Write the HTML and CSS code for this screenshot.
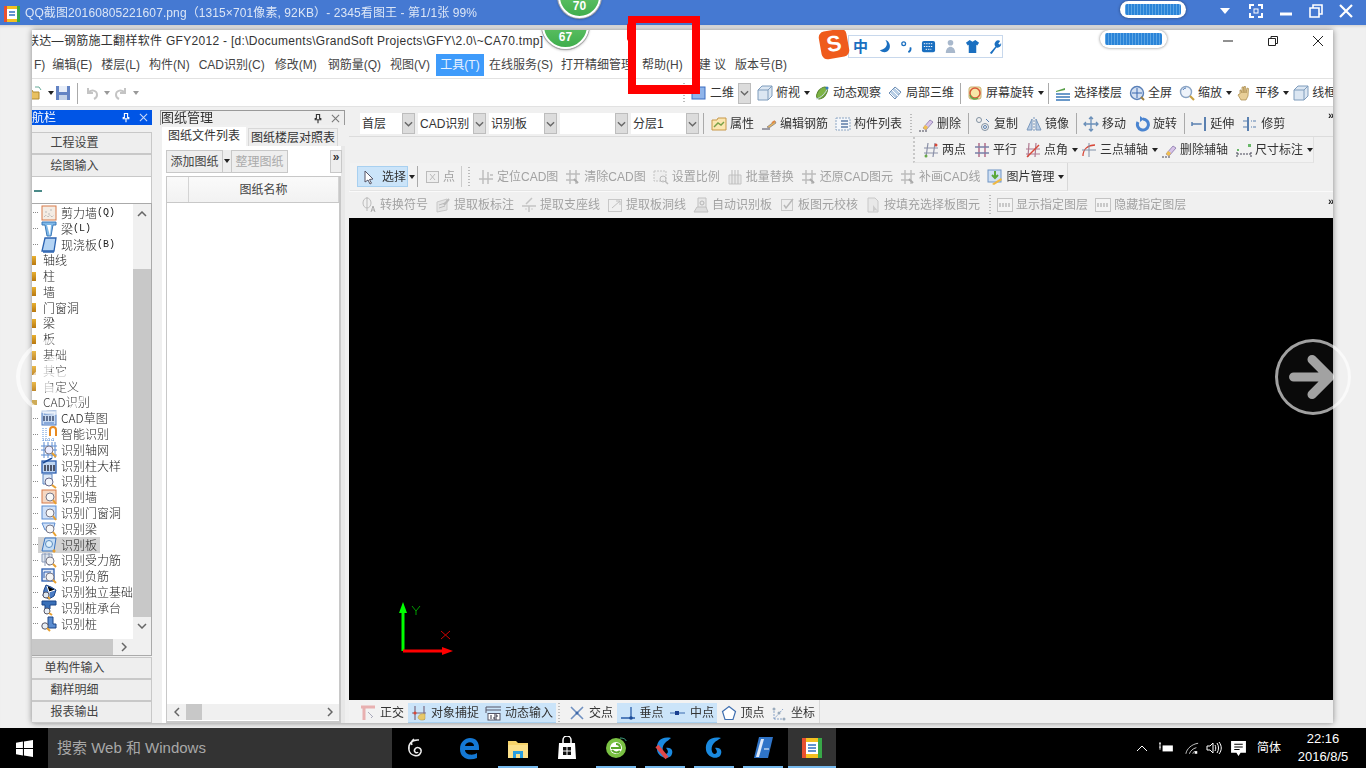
FILE: index.html
```html
<!DOCTYPE html>
<html lang="zh-CN">
<head>
<meta charset="utf-8">
<title>QQ截图20160805221607.png - 2345看图王</title>
<link rel="stylesheet" href="styles.css">
</head>
<body>
<svg class="defs" width="0" height="0" aria-hidden="true">
<defs>
<symbol id="open" viewBox="0 0 16 16"><path d="M1 5h5l1 2h6v7H1z" fill="#e8c060" stroke="#b08a30"/><path d="M9 2l4 0 2 3" fill="none" stroke="#6a9"/></symbol>
<symbol id="save" viewBox="0 0 16 16"><rect x="1" y="1" width="14" height="14" fill="#6484c4"/><rect x="4" y="1" width="8" height="6" fill="#e8eef8"/><rect x="4" y="10" width="8" height="5" fill="#c4d2e8"/></symbol>
<symbol id="undo" viewBox="0 0 16 16"><path d="M4 3v5h5M4 8c3-4 9-3 9 2 0 2-1 3-3 4" fill="none" stroke="#c4c4c4" stroke-width="2"/></symbol>
<symbol id="redo" viewBox="0 0 16 16"><path d="M12 3v5H7M12 8C9 4 3 5 3 10c0 2 1 3 3 4" fill="none" stroke="#c4c4c4" stroke-width="2"/></symbol>
<symbol id="square" viewBox="0 0 16 16"><rect x="1" y="2" width="13" height="12" fill="#8fb4ea" stroke="#3a6cc0"/></symbol>
<symbol id="cube" viewBox="0 0 16 16"><path d="M1 5l4-4h10v10l-4 4H1z" fill="#dbe6f2" stroke="#7f9cbc"/><path d="M1 5h10v10M11 5l4-4" fill="none" stroke="#7f9cbc"/></symbol>
<symbol id="orbit" viewBox="0 0 16 16"><ellipse cx="8" cy="8" rx="4" ry="7" transform="rotate(40 8 8)" fill="#7cb342" stroke="#54802a"/><path d="M2 14C7 13 12 8 14 2" fill="none" stroke="#c8d8e8"/><circle cx="13" cy="3" r="1.500" fill="#3a7cc0"/></symbol>
<symbol id="hatch" viewBox="0 0 16 16"><path d="M2 8l6-6 6 5-6 7z" fill="#b9cfe6" stroke="#6f8fb5"/><path d="M5 5l6 6M8 3l5 5M3 8l5 5" stroke="#fff"/></symbol>
<symbol id="spin" viewBox="0 0 16 16"><rect x="2" y="2" width="12" height="12" rx="2" fill="#f7e6a8" stroke="#c8b070"/><circle cx="8" cy="8" r="5" fill="none" stroke="#d8583a" stroke-width="1.500"/><path d="M3 10a5 5 0 0 0 8 3" fill="none" stroke="#62a84a" stroke-width="1.500"/></symbol>
<symbol id="floors" viewBox="0 0 16 16"><path d="M1 6l9-3v2l-9 2z" fill="#5aa04a"/><path d="M1 9h14M1 12h14M1 15h14" stroke="#3a78b8" stroke-width="1.500"/></symbol>
<symbol id="full" viewBox="0 0 16 16"><circle cx="8" cy="8" r="6.500" fill="#d4e0f2" stroke="#5a80b8" stroke-width="1.400"/><path d="M8 3v10M3 8h10" stroke="#3a68b0"/><path d="M12 12l3 3" stroke="#a08040" stroke-width="2"/></symbol>
<symbol id="zoomi" viewBox="0 0 16 16"><circle cx="7" cy="7" r="5.500" fill="#eef3fa" stroke="#8aa4c4" stroke-width="1.400"/><path d="M11 11l4 4" stroke="#c8a040" stroke-width="2.200"/><path d="M4 5a3 3 0 0 1 3-2" stroke="#4a78b8" fill="none"/></symbol>
<symbol id="hand" viewBox="0 0 16 16"><path d="M4 9V5l1 0 1 3V2h1.500l.5 6V1.500h1.500L10 8l1-5 1.500.5L12 11l-2 4H5L2 10l1-1z" fill="#e8cf98" stroke="#a88848" stroke-width=".7"/></symbol>
<symbol id="attr" viewBox="0 0 16 16"><path d="M1 4h5l1-2h8v12H1z" fill="#fbe6b0" stroke="#c89848"/><path d="M3 11l4-4 3 2 3-3" fill="none" stroke="#78a048" stroke-width="1.400"/></symbol>
<symbol id="pen" viewBox="0 0 16 16"><path d="M1 13h8" stroke="#667" stroke-width="1.200"/><path d="M6 11l8-6 1 2-7 5z" fill="#e8b860" stroke="#667" stroke-width=".6"/><path d="M11 7l3-2" stroke="#d84" stroke-width="2"/></symbol>
<symbol id="list" viewBox="0 0 16 16"><rect x="1" y="2" width="14" height="12" fill="#f4f7fb" stroke="#8ca6c4" stroke-dasharray="2 1"/><path d="M6 5h7M6 8h7M6 11h7" stroke="#5b7ca8" stroke-width="1.300"/></symbol>
<symbol id="erase" viewBox="0 0 16 16"><path d="M1 15h8" stroke="#445" stroke-dasharray="2 1"/><path d="M5 12l7-8 3 2-7 8z" fill="#d8c4e8" stroke="#7a68a0" stroke-width=".7"/><path d="M5 12l2-3 3 2-2 3z" fill="#f0c050"/></symbol>
<symbol id="copy" viewBox="0 0 16 16"><circle cx="4" cy="4" r="2.500" fill="none" stroke="#8090a0"/><circle cx="10" cy="11" r="3.500" fill="none" stroke="#8090a0"/><circle cx="10" cy="11" r="1.500" fill="none" stroke="#5a80b0"/><path d="M11 3l3 3" stroke="#5a80b0"/></symbol>
<symbol id="mirror" viewBox="0 0 16 16"><path d="M1 14L6 3v11zM15 14L10 3v11z" fill="#b9cce4" stroke="#7a98bc"/><path d="M8 1v14" stroke="#7a98bc" stroke-dasharray="2 1"/></symbol>
<symbol id="move" viewBox="0 0 16 16"><path d="M8 1v14M1 8h14M6 3l2-2 2 2M6 13l2 2 2-2M3 6L1 8l2 2M13 6l2 2-2 2" fill="none" stroke="#6a8fb8" stroke-width="1.300"/></symbol>
<symbol id="rot" viewBox="0 0 16 16"><path d="M9 3a5.500 5.500 0 1 1-5 3" fill="none" stroke="#4a84d0" stroke-width="3"/><path d="M6 0l4 3-4 3z" fill="#4a84d0"/></symbol>
<symbol id="extend" viewBox="0 0 16 16"><path d="M1 8h9M1 6v4" stroke="#5a80b0" stroke-width="1.500"/><path d="M10 8h2" stroke="#5a80b0" stroke-dasharray="1 1"/><path d="M14 1v14" stroke="#5a80b0" stroke-width="2"/></symbol>
<symbol id="trim" viewBox="0 0 16 16"><path d="M1 5h13M1 11h13" stroke="#5a80b0" stroke-dasharray="6 2 1 1"/><path d="M6 1v14" stroke="#5a80b0" stroke-width="2"/></symbol>
<symbol id="aux2" viewBox="0 0 16 16"><path d="M5 1L3 15M12 1l-2 14M1 6h14M1 11h14" stroke="#8a90a8" stroke-width="1.200"/><circle cx="3" cy="14" r="1.500" fill="#68a848"/><circle cx="13" cy="3" r="1.500" fill="#d84838"/></symbol>
<symbol id="par" viewBox="0 0 16 16"><path d="M5 1v14M11 1v14" stroke="#a85878" stroke-width="1.300"/><path d="M1 5h14M1 11h14" stroke="#7880a8" stroke-width="1.300"/></symbol>
<symbol id="ang" viewBox="0 0 16 16"><path d="M4 1L3 15M11 1l-1 14M1 7h14M1 12h14" stroke="#b07890" stroke-width="1.200"/><path d="M2 15L14 3" stroke="#d84838" stroke-width="1.400"/></symbol>
<symbol id="three" viewBox="0 0 16 16"><path d="M2 14c0-7 5-11 12-11" fill="none" stroke="#d84838" stroke-width="1.300"/><path d="M8 1v14M1 8h14" stroke="#8090a8"/></symbol>
<symbol id="dim" viewBox="0 0 16 16"><path d="M1 12h14M1 10v5M15 10v5" stroke="#445" stroke-dasharray="2 1"/><rect x="12" y="2" width="3" height="3" fill="#68b868"/><rect x="1" y="7" width="2" height="2" fill="#68b868"/></symbol>
<symbol id="arrowc" viewBox="0 0 16 16"><path d="M4 2v11l3-2 2 4 1.500-.8-2-3.700 3.500-.5z" fill="#fff" stroke="#556"/></symbol>
<symbol id="pbox" viewBox="0 0 16 16"><rect x="1.500" y="2.500" width="12" height="11" fill="#eee" stroke="#bbb"/><path d="M5 5l5 6M10 5l-5 6" stroke="#bbb"/></symbol>
<symbol id="g-hash" viewBox="0 0 16 16"><path d="M5 1v14M10 3v12M1 10h14M12 6h3" stroke="#bdbdbd" stroke-width="1.400"/></symbol>
<symbol id="g-clr" viewBox="0 0 16 16"><path d="M5 1v14M11 1v14M1 5h14M1 11h9" stroke="#bdbdbd" stroke-width="1.400"/><path d="M9 10l4 4" stroke="#aaa" stroke-width="2"/></symbol>
<symbol id="g-scale" viewBox="0 0 16 16"><rect x="1" y="2" width="12" height="10" fill="#eee" stroke="#c4c4c4" stroke-dasharray="2 1"/><circle cx="10" cy="10" r="3" fill="none" stroke="#bbb"/><path d="M12 12l3 3" stroke="#bbb" stroke-width="1.500"/></symbol>
<symbol id="g-batch" viewBox="0 0 16 16"><path d="M2 6h12v9H2z" fill="#e8e8e8" stroke="#c4c4c4"/><path d="M5 1v14M8 1v14M11 1v14" stroke="#bbb"/></symbol>
<symbol id="g-sym" viewBox="0 0 16 16"><ellipse cx="6" cy="6" rx="4" ry="5" fill="none" stroke="#bbb"/><path d="M6 0v14" stroke="#bbb"/><path d="M10 15l2-6 2 6M11 13h2" stroke="#aaa" fill="none"/></symbol>
<symbol id="g-note" viewBox="0 0 16 16"><path d="M2 5l10-3v11L2 15z" fill="#e4e4e4" stroke="#c8c8c8"/><path d="M4 8l6-2M4 11l6-2" stroke="#bbb"/><path d="M9 8l5-6" stroke="#bbb" stroke-width="2"/></symbol>
<symbol id="g-seat" viewBox="0 0 16 16"><path d="M1 9h14M8 9v6M11 1L5 7" stroke="#c4c4c4" stroke-width="1.500"/><path d="M4 12h8" stroke="#ccc" stroke-dasharray="2 1"/></symbol>
<symbol id="g-hole" viewBox="0 0 16 16"><rect x="1.500" y="2.500" width="13" height="12" fill="#f0f0f0" stroke="#c8c8c8"/><path d="M5 11l8-7M9 4h4v4" fill="none" stroke="#c0c0c0"/></symbol>
<symbol id="g-auto" viewBox="0 0 16 16"><path d="M5 1h8v10H5z" fill="#e8e8e8" stroke="#c0c0c0"/><path d="M1 15l3-5h9l2 5z" fill="#ddd" stroke="#c0c0c0"/><circle cx="9" cy="6" r="2" fill="none" stroke="#b4b4b4"/></symbol>
<symbol id="g-check" viewBox="0 0 16 16"><rect x="2.500" y="2.500" width="11" height="11" fill="#eee" stroke="#c8c8c8"/><path d="M5 8l2 3 7-9" fill="none" stroke="#b8b8b8" stroke-width="1.500"/></symbol>
<symbol id="g-fill" viewBox="0 0 16 16"><path d="M3 1h7l3 3v11H3z" fill="#e8e8e8" stroke="#c8c8c8"/><path d="M8 8v7l2-2 3 1z" fill="#ccc"/></symbol>
<symbol id="g-cad" viewBox="0 0 16 14"><rect x=".5" y=".5" width="15" height="13" fill="#f4f4f4" stroke="#c4c4c4"/><path d="M3 5v4M6 5v4M9 5v4M12 5v4" stroke="#bbb" stroke-width="1.500"/></symbol>
<symbol id="picm" viewBox="0 0 16 16"><rect x="1" y="1" width="13" height="12" fill="#cfe0f4" stroke="#6f94c4"/><path d="M8 2v6M5 6l3 3 3-3" fill="none" stroke="#5aa83a" stroke-width="2"/><path d="M5 15l9-6 1 2-8 5z" fill="#f0b840"/></symbol>
<symbol id="ortho" viewBox="0 0 16 16"><path d="M1 2h14M4 2v13" stroke="#e8b0b0" stroke-width="3"/><path d="M8 7l5 5M11 13l2-2" stroke="#aab"/></symbol>
<symbol id="snap" viewBox="0 0 16 16"><path d="M4 1v14M13 1v14M1 8h14" stroke="#7a6a80" stroke-width="1.200"/><circle cx="4" cy="8" r="1.600" fill="#d84838"/><path d="M7 13c0-3 3-5 7-4v5c-2 2-6 1-7-1z" fill="#e8c868" stroke="#b8983c" stroke-width=".5"/></symbol>
<symbol id="dyn" viewBox="0 0 16 16"><path d="M1 2h15M1 5h15M1 2v6" stroke="#556" /><rect x="3" y="8.500" width="12" height="6.500" fill="#fff" stroke="#556"/><path d="M6 10v4M9 10h3v2h-3v2h3" stroke="#334" fill="none"/></symbol>
<symbol id="cross" viewBox="0 0 16 16"><path d="M2 2l12 12M14 2L2 14" stroke="#6e8fc0" stroke-width="1.600"/><circle cx="8" cy="8" r="1.500" fill="#3a66a8"/></symbol>
<symbol id="perp" viewBox="0 0 16 16"><path d="M1 13h14M11 2v11" stroke="#2a5ca8" stroke-width="1.300"/><circle cx="11" cy="13" r="1.800" fill="#1a4a98"/></symbol>
<symbol id="mid" viewBox="0 0 16 16"><path d="M0 8h15" stroke="#5a86c0" stroke-width="1.300"/><rect x="5" y="6" width="4" height="4" fill="#1a3f90"/></symbol>
<symbol id="pent" viewBox="0 0 16 16"><path d="M8 1.500l6.500 5-2.500 8H4l-2.500-8z" fill="#fff" stroke="#3f6fb0" stroke-width="1.200"/></symbol>
<symbol id="coord" viewBox="0 0 16 16"><path d="M3 14V5M3 14h10M3 14L12 4" stroke="#8aa4c8" stroke-dasharray="2 1"/><circle cx="3" cy="4" r="1.500" fill="#9ab"/><circle cx="13" cy="14" r="1.500" fill="#9ab"/><circle cx="8" cy="8" r="1.500" fill="#9ab"/></symbol>
<symbol id="t-wall" viewBox="0 0 16 16"><rect x="1" y="1" width="14" height="14" fill="#f4ece4" stroke="#d87a48"/><path d="M3 12l2-2 2 2 2-2 2 2 2-2" stroke="#aaa" stroke-dasharray="1 1" fill="none"/><path d="M4 7h2M9 5h2M7 9h2" stroke="#bbb"/></symbol>
<symbol id="t-beam" viewBox="0 0 16 16"><path d="M1 1h14v3h-3l-2 11H6L4 4H1z" fill="#7eb8e8" stroke="#3a78b8"/><path d="M6 4l4 0-1 11" fill="#fff"/></symbol>
<symbol id="t-slab" viewBox="0 0 16 16"><path d="M4 1h11l-2 13H1z" fill="#b4d4f4" stroke="#2a62b0" stroke-width="1.300"/><path d="M2 15h11" stroke="#2a62b0" stroke-width="1.500"/></symbol>
<symbol id="t-cad" viewBox="0 0 16 16"><rect x="1" y="1" width="14" height="14" fill="#c8daf2" stroke="#4a78c0"/><path d="M3 4l10 0M3 13h10" stroke="#4a78c0"/><path d="M3 6v5M6 6v5M9 6v5M12 6v5" stroke="#1a2a50" stroke-width="1.200"/></symbol>
<symbol id="t-smart" viewBox="0 0 16 16"><path d="M9 10V4a3 3 0 0 1 6 0v6" fill="none" stroke="#e88a20" stroke-width="2"/><path d="M2 2v14M5 2v14M8 12v4M12 12v4M2 14h12" stroke="#5a90d8" stroke-dasharray="1 1"/></symbol>
<symbol id="t-axis" viewBox="0 0 16 16"><path d="M3 0v16M7 0v16M11 0v16M14 0v16M0 4h16M0 8h16M0 13h16" stroke="#5a8ad0"/><circle cx="8" cy="8" r="4" fill="#eef" stroke="#778"/><path d="M11 11l4 4" stroke="#e8a030" stroke-width="2"/></symbol>
<symbol id="t-colb" viewBox="0 0 16 16"><rect x="1" y="3" width="14" height="12" fill="#c0d6f2" stroke="#2a5cb0" stroke-width="1.300"/><path d="M4 7v6M7 7v6M10 7v6M13 7v6" stroke="#112" stroke-width="1.300"/><path d="M2 5l9-5" stroke="#1a4a98" stroke-width="1.500"/></symbol>
<symbol id="t-col" viewBox="0 0 16 16"><path d="M2 1h9v10H2z" fill="#dde8f6" stroke="#5a84c0"/><circle cx="8" cy="9" r="4" fill="#f4f6fa" stroke="#668"/><path d="M11 12l4 3" stroke="#e8a030" stroke-width="2"/></symbol>
<symbol id="t-wl" viewBox="0 0 16 16"><rect x="1" y="1" width="14" height="13" fill="#f4d8c4" stroke="#d87a48"/><circle cx="9" cy="8" r="4" fill="#f8f8f8" stroke="#778"/><path d="M12 11l3 4" stroke="#e8a030" stroke-width="2"/></symbol>
<symbol id="t-door" viewBox="0 0 16 16"><rect x="1" y="1" width="14" height="13" fill="#cfe0f8" stroke="#5a8cd0"/><circle cx="9" cy="8" r="4" fill="#f8f8f8" stroke="#778"/><path d="M12 11l3 4" stroke="#e8a030" stroke-width="2"/></symbol>
<symbol id="t-bm" viewBox="0 0 16 16"><path d="M1 2h13L12 9H4z" fill="#cfe0f8" stroke="#5a8cd0"/><circle cx="9" cy="8" r="4" fill="#f8f8f8" stroke="#778"/><path d="M12 11l3 4" stroke="#e8a030" stroke-width="2"/></symbol>
<symbol id="t-sl" viewBox="0 0 16 16"><path d="M4 1h11l-2 13H1z" fill="#c4dcf4" stroke="#3a74c0"/><circle cx="8" cy="7" r="3.500" fill="#e0f0fa" stroke="#5a8cc0"/><path d="M12 13l2 2" stroke="#e8a030" stroke-width="2.500"/></symbol>
<symbol id="t-bar" viewBox="0 0 16 16"><path d="M1 2h10v8H1zM4 0v14M8 0v14" fill="#dfe6ee" stroke="#8a9ab8"/><circle cx="9" cy="9" r="4" fill="#f4f4f4" stroke="#778"/><path d="M12 12l3 3" stroke="#e8a030" stroke-width="2"/></symbol>
<symbol id="t-neg" viewBox="0 0 16 16"><rect x="1" y="1" width="12" height="12" fill="#dfe8f6" stroke="#2a5cb0" stroke-width="1.300"/><path d="M3 4h7M3 4v6" stroke="#2a5cb0"/><circle cx="9" cy="9" r="4" fill="#f4f4f4" stroke="#778"/><path d="M12 12l3 3" stroke="#e8a030" stroke-width="2"/></symbol>
<symbol id="t-fnd" viewBox="0 0 16 16"><path d="M5 1l5 2 5 3-2 6-5 3-6-3 1-6z" fill="#4a7cc4" stroke="#1a4488"/><path d="M6 2l2 6 6-2M8 8l0 6" stroke="#fff"/><circle cx="5" cy="11" r="3" fill="#e0e8f0" stroke="#556"/><path d="M7 13l2 2" stroke="#e8a030" stroke-width="2"/></symbol>
<symbol id="t-cap" viewBox="0 0 16 16"><path d="M1 1h14v4H9v4H4V5H1z" fill="#3a70b8" stroke="#1a4488"/><circle cx="6" cy="11" r="3" fill="#e8eef4" stroke="#556"/><path d="M8 13l3 2" stroke="#e8a030" stroke-width="2"/></symbol>
<symbol id="t-pile" viewBox="0 0 16 16"><path d="M7 1h5v7h3v4H7z" fill="#5a8cd0" stroke="#1a4488"/><circle cx="4" cy="10" r="3.200" fill="#e8eef4" stroke="#556"/><path d="M6 12l3 3" stroke="#e8a030" stroke-width="2"/></symbol>
<symbol id="pin" viewBox="0 0 10 12"><path d="M3 1h4v5h1.500v1.500h-7V6H3zM5 7.500V12" fill="none" stroke="currentColor" stroke-width="1.400"/></symbol>
<symbol id="x" viewBox="0 0 10 10"><path d="M1 1l8 8M9 1L1 9" stroke="currentColor" stroke-width="1.200"/></symbol>
<symbol id="chev" viewBox="0 0 10 6"><path d="M1 1l4 4 4-4" fill="none" stroke="currentColor" stroke-width="1.500"/></symbol>
</defs>
</svg>

<header class="viewer-bar">
  <svg class="viewer-logo" viewBox="0 0 16 18"><rect x="0" y="2" width="16" height="16" rx="1" fill="#f4c020"/><rect x="0" y="2" width="3" height="16" fill="#e85030"/><rect x="13" y="2" width="3" height="16" fill="#38a848"/><rect x="3" y="5" width="10" height="10" fill="#fff"/><path d="M5 8h6M5 11h6" stroke="#3070c0" stroke-width="1.500"/></svg>
  <span class="viewer-title">QQ截图20160805221607.png（1315×701像素, 92KB）- 2345看图王 - 第1/1张 99%</span>
  <div class="viewer-controls">
    <span class="vtri"></span>
    <svg class="vbtn" viewBox="0 0 16 16"><path d="M2 6V2h4M10 2h4v4M14 10v4h-4M6 14H2v-4" fill="none" stroke="#fff" stroke-width="2"/><rect x="6" y="6" width="4" height="4" fill="none" stroke="#fff"/></svg>
    <svg class="vbtn" viewBox="0 0 16 16"><path d="M2 11h12" stroke="#fff" stroke-width="3"/></svg>
    <svg class="vbtn" viewBox="0 0 16 16"><path d="M2 5h9v9H2zM5 5V2h9v9h-3" fill="none" stroke="#fff" stroke-width="1.600"/></svg>
    <svg class="vbtn" viewBox="0 0 16 16"><path d="M2 2l12 12M14 2L2 14" stroke="#fff" stroke-width="2.200"/></svg>
  </div>
  <div class="score score-top"><b>70</b></div>
  <div class="pill pill-top"><i></i></div>
</header>

<main class="stage">
  <div class="app">
    <div class="app-title"><span class="app-title-text">联达—钢筋施工翻样软件 GFY2012 - [d:\Documents\GrandSoft Projects\GFY\2.0\~CA70.tmp]</span></div>
    <nav class="menu">
      <span class="m-first">F)</span><span>编辑(E)</span><span>楼层(L)</span><span>构件(N)</span><span>CAD识别(C)</span><span class="m-mod">修改(M)</span><span class="m-steel">钢筋量(Q)</span><span>视图(V)</span><span class="m-on">工具(T)</span><span>在线服务(S)</span><span class="m-open">打开精细管理</span><span class="m-help">帮助(H)</span><span class="m-sug">建 议</span><span>版本号(B)</span>
    </nav>
    <div class="topbar">
      <div class="top-left">
        <svg class="ic ic-clip"><use href="#open"/></svg><i class="caret dark"></i>
        <svg class="ic ic-save"><use href="#save"/></svg><i class="sep sep-save"></i>
        <svg class="ic"><use href="#undo"/></svg><i class="caret"></i>
        <svg class="ic"><use href="#redo"/></svg><i class="caret"></i>
      </div>
      <i class="handle"></i>
      <div class="seq g6 top-right">
        <span class="tool"><svg class="ic"><use href="#square"/></svg><span class="t2d">二维</span><b class="dd"><svg><use href="#chev"/></svg></b></span>
        <span class="tool"><svg class="ic"><use href="#cube"/></svg>俯视<i class="caret dark"></i></span>
        <span class="tool"><svg class="ic"><use href="#orbit"/></svg>动态观察</span>
        <span class="tool"><svg class="ic"><use href="#hatch"/></svg>局部三维</span>
        <i class="sep"></i>
        <span class="tool"><svg class="ic"><use href="#spin"/></svg>屏幕旋转<i class="caret dark"></i></span>
        <i class="sep"></i>
        <span class="tool"><svg class="ic"><use href="#floors"/></svg>选择楼层</span>
        <span class="tool t-nudge"><svg class="ic"><use href="#full"/></svg>全屏</span>
        <span class="tool t-nudge"><svg class="ic"><use href="#zoomi"/></svg>缩放<i class="caret dark"></i></span>
        <span class="tool"><svg class="ic"><use href="#hand"/></svg>平移<i class="caret dark"></i></span>
        <span class="tool"><svg class="ic"><use href="#cube"/></svg>线框</span>
      </div>
    </div>

    <div class="workspace">
      <aside class="nav">
        <div class="nav-head"><span>航栏</span><svg class="pin"><use href="#pin"/></svg><svg class="close"><use href="#x"/></svg></div>
        <div class="nav-btn">工程设置</div>
        <div class="nav-btn nb-tall">绘图输入</div>
        <div class="nav-search"><i></i></div>
        <div class="tree-box">
          <div class="tree-main">
            <ul class="tree">
              <li class="l2"><i></i><svg class="ic"><use href="#t-wall"/></svg>剪力墙<span class="mono">(Q)</span></li>
              <li class="l2"><i></i><svg class="ic"><use href="#t-beam"/></svg>梁<span class="mono">(L)</span></li>
              <li class="l2"><i></i><svg class="ic"><use href="#t-slab"/></svg>现浇板<span class="mono">(B)</span></li>
              <li class="l1"><i></i>轴线</li>
              <li class="l1"><i></i>柱</li>
              <li class="l1"><i></i>墙</li>
              <li class="l1"><i></i>门窗洞</li>
              <li class="l1"><i></i>梁</li>
              <li class="l1"><i></i>板</li>
              <li class="l1"><i></i>基础</li>
              <li class="l1"><i></i>其它</li>
              <li class="l1"><i></i>自定义</li>
              <li class="l1 open"><i></i>CAD识别</li>
              <li class="l2"><i></i><svg class="ic"><use href="#t-cad"/></svg>CAD草图</li>
              <li class="l2"><i></i><svg class="ic"><use href="#t-smart"/></svg>智能识别</li>
              <li class="l2"><i></i><svg class="ic"><use href="#t-axis"/></svg>识别轴网</li>
              <li class="l2"><i></i><svg class="ic"><use href="#t-colb"/></svg>识别柱大样</li>
              <li class="l2"><i></i><svg class="ic"><use href="#t-col"/></svg>识别柱</li>
              <li class="l2"><i></i><svg class="ic"><use href="#t-wl"/></svg>识别墙</li>
              <li class="l2"><i></i><svg class="ic"><use href="#t-door"/></svg>识别门窗洞</li>
              <li class="l2"><i></i><svg class="ic"><use href="#t-bm"/></svg>识别梁</li>
              <li class="l2 sel"><i></i><svg class="ic"><use href="#t-sl"/></svg><span>识别板</span></li>
              <li class="l2"><i></i><svg class="ic"><use href="#t-bar"/></svg>识别受力筋</li>
              <li class="l2"><i></i><svg class="ic"><use href="#t-neg"/></svg>识别负筋</li>
              <li class="l2"><i></i><svg class="ic"><use href="#t-fnd"/></svg>识别独立基础</li>
              <li class="l2"><i></i><svg class="ic"><use href="#t-cap"/></svg>识别桩承台</li>
              <li class="l2"><i></i><svg class="ic"><use href="#t-pile"/></svg>识别桩</li>
            </ul>
            <div class="vscroll">
              <svg class="up"><use href="#chev"/></svg>
              <div class="vthumb"></div>
              <svg class="down"><use href="#chev"/></svg>
            </div>
          </div>
          <div class="hscroll"><div class="hthumb"></div><svg class="right"><use href="#chev"/></svg></div>
        </div>
        <div class="nav-btn nb2 nb-first">单构件输入</div>
        <div class="nav-btn nb2">翻样明细</div>
        <div class="nav-btn nb2">报表输出</div>
      </aside>

      <section class="panel">
        <div class="panel-head"><span>图纸管理</span><svg class="pin"><use href="#pin"/></svg><svg class="close"><use href="#x"/></svg></div>
        <div class="tabs"><span class="tab on">图纸文件列表</span><span class="tab">图纸楼层对照表</span></div>
        <div class="panel-body">
          <div class="panel-tools">
            <span class="pbtn">添加图纸</span><span class="pdrop"><i class="caret dark"></i></span><span class="pbtn off">整理图纸</span>
            <span class="pmore">»</span>
          </div>
          <div class="table">
            <div class="thead"><span class="th0"></span><span class="th1">图纸名称</span></div>
            <div class="tbody"></div>
            <div class="thscroll"><svg class="left"><use href="#chev"/></svg><div class="ththumb"></div><svg class="right"><use href="#chev"/></svg></div>
          </div>
        </div>
      </section>

      <section class="work">
        <div class="row row1">
          <span class="combo c55"><span>首层</span><b class="dd"><svg><use href="#chev"/></svg></b></span>
          <span class="combo c68"><span>CAD识别</span><b class="dd"><svg><use href="#chev"/></svg></b></span>
          <span class="combo c68"><span>识别板</span><b class="dd"><svg><use href="#chev"/></svg></b></span>
          <span class="combo c68"><span></span><b class="dd"><svg><use href="#chev"/></svg></b></span>
          <span class="combo c68"><span>分层1</span><b class="dd"><svg><use href="#chev"/></svg></b></span>
          <i class="sep sep-a"></i>
          <div class="seq g7">
            <span class="tool"><svg class="ic"><use href="#attr"/></svg>属性</span>
            <span class="tool"><svg class="ic"><use href="#pen"/></svg>编辑钢筋</span>
            <span class="tool"><svg class="ic"><use href="#list"/></svg>构件列表</span>
          </div>
          <i class="handle h-a"></i>
          <div class="seq g8">
            <span class="tool"><svg class="ic"><use href="#erase"/></svg>删除</span>
            <i class="sep"></i>
            <span class="tool"><svg class="ic"><use href="#copy"/></svg>复制</span>
            <span class="tool"><svg class="ic"><use href="#mirror"/></svg>镜像</span>
            <i class="sep"></i>
            <span class="tool"><svg class="ic"><use href="#move"/></svg>移动</span>
            <span class="tool"><svg class="ic"><use href="#rot"/></svg>旋转</span>
            <i class="sep"></i>
            <span class="tool"><svg class="ic"><use href="#extend"/></svg>延伸</span>
            <span class="tool"><svg class="ic"><use href="#trim"/></svg>修剪</span>
          </div>
          <span class="more">»</span>
        </div>

        <div class="row row2">
          <div class="aux seq g8">
            <span class="tool"><svg class="ic"><use href="#aux2"/></svg>两点</span>
            <span class="tool"><svg class="ic"><use href="#par"/></svg>平行</span>
            <span class="tool"><svg class="ic"><use href="#ang"/></svg>点角<i class="caret dark"></i></span>
            <span class="tool"><svg class="ic"><use href="#three"/></svg>三点辅轴<i class="caret dark"></i></span>
            <span class="tool"><svg class="ic"><use href="#erase"/></svg>删除辅轴</span>
            <span class="tool"><svg class="ic"><use href="#dim"/></svg>尺寸标注<i class="caret dark"></i></span>
          </div>
        </div>

        <div class="row row3">
          <div class="rowbox">
            <span class="select"><svg class="ic"><use href="#arrowc"/></svg>选择<i class="caret dark"></i></span>
            <i class="sep sep-b"></i>
            <span class="tool off pt"><svg class="ic"><use href="#pbox"/></svg>点</span>
            <i class="sep sep-c"></i>
            <i class="handle h-b"></i>
            <div class="seq g7">
              <span class="tool off"><svg class="ic"><use href="#g-hash"/></svg>定位CAD图</span>
              <span class="tool off"><svg class="ic"><use href="#g-clr"/></svg>清除CAD图</span>
              <span class="tool off"><svg class="ic"><use href="#g-scale"/></svg>设置比例</span>
              <span class="tool off"><svg class="ic"><use href="#g-batch"/></svg>批量替换</span>
              <span class="tool off"><svg class="ic"><use href="#g-clr"/></svg>还原CAD图元</span>
              <span class="tool off"><svg class="ic"><use href="#g-clr"/></svg>补画CAD线</span>
              <span class="tool"><svg class="ic"><use href="#picm"/></svg>图片管理<i class="caret dark"></i></span>
            </div>
          </div>
        </div>

        <div class="row row4">
          <div class="seq g7">
            <span class="tool off"><svg class="ic"><use href="#g-sym"/></svg>转换符号</span>
            <span class="tool off"><svg class="ic"><use href="#g-note"/></svg>提取板标注</span>
            <span class="tool off"><svg class="ic"><use href="#g-seat"/></svg>提取支座线</span>
            <span class="tool off"><svg class="ic"><use href="#g-hole"/></svg>提取板洞线</span>
            <span class="tool off"><svg class="ic"><use href="#g-auto"/></svg>自动识别板</span>
            <span class="tool off"><svg class="ic"><use href="#g-check"/></svg>板图元校核</span>
            <span class="tool off"><svg class="ic"><use href="#g-fill"/></svg>按填充选择板图元</span>
          </div>
          <i class="handle h-c"></i>
          <div class="seq g7">
            <span class="tool off"><svg class="ic"><use href="#g-cad"/></svg>显示指定图层</span>
            <span class="tool off"><svg class="ic"><use href="#g-cad"/></svg>隐藏指定图层</span>
          </div>
          <span class="more">»</span>
        </div>

        <div class="canvas">
          <svg class="axes" viewBox="0 0 70 70">
            <path d="M20 12v43" stroke="#00ff00" stroke-width="3"/>
            <path d="M20 6l-4 11h8z" fill="#00ff00"/>
            <path d="M20 55h40" stroke="#ff0000" stroke-width="3"/>
            <path d="M70 55l-11-4v8z" fill="#ff0000"/>
            <path d="M29 10l4 5 4-5M33 15v4" fill="none" stroke="#009a00"/>
            <path d="M58 35l9 8M67 35l-9 8" stroke="#d00000"/>
          </svg>
        </div>

        <div class="status">
          <div class="seq st-a">
            <span class="tool st"><svg class="ic"><use href="#ortho"/></svg>正交</span>
            <span class="tool st on"><svg class="ic"><use href="#snap"/></svg>对象捕捉</span>
            <span class="tool st on"><svg class="ic"><use href="#dyn"/></svg>动态输入</span>
          </div>
          <i class="handle h-d"></i>
          <div class="seq st-b">
            <span class="tool st"><svg class="ic"><use href="#cross"/></svg>交点</span>
            <span class="tool st on"><svg class="ic"><use href="#perp"/></svg>垂点</span>
            <span class="tool st on"><svg class="ic"><use href="#mid"/></svg>中点</span>
            <span class="tool st"><svg class="ic"><use href="#pent"/></svg>顶点</span>
            <span class="tool st"><svg class="ic"><use href="#coord"/></svg>坐标</span>
          </div>
        </div>
      </section>
    </div>

    <div class="score score-app"><b>67</b></div>
    <div class="pill pill-app"><i></i></div>
    <div class="ime">
      <span class="ime-s">S</span>
      <div class="ime-bar">
        <span class="ime-zh">中</span>
        <svg viewBox="0 0 16 16"><path d="M9 1c3 4 2 9-6 11 3 3 8 3 10-1 2-4 0-9-4-10z" fill="#1a6fc0"/></svg>
        <svg viewBox="0 0 16 16"><circle cx="5" cy="5" r="2" fill="none" stroke="#1a6fc0" stroke-width="1.400"/><path d="M12 9c1 2 0 4-2 5" fill="none" stroke="#1a6fc0" stroke-width="2"/></svg>
        <svg viewBox="0 0 16 16"><rect x="1" y="2" width="14" height="12" rx="2" fill="#1a6fc0"/><path d="M3 5h10M3 8h10M5 11h6" stroke="#fff" stroke-dasharray="1.500 1"/></svg>
        <svg viewBox="0 0 16 16"><circle cx="8" cy="4" r="3" fill="#a8b8cc"/><path d="M3 15c0-9 10-9 10 0z" fill="#a8b8cc"/></svg>
        <svg viewBox="0 0 16 16"><path d="M5 1l3 2 3-2 4 3-2 3-1-1v9H4V6L3 7 1 4z" fill="#1a6fc0"/></svg>
        <svg viewBox="0 0 16 16"><path d="M3 15l6-7a4 4 0 0 1 5-6l-2 3 2 1 1-2a4 4 0 0 1-5 5l-5 7z" fill="#1a6fc0"/></svg>
      </div>
    </div>
    <div class="app-controls">
      <svg viewBox="0 0 14 14"><path d="M2 7h10" stroke="#222"/></svg>
      <svg viewBox="0 0 14 14"><path d="M2.500 4.500h7v7h-7zM5 4.500v-2h6.500v7h-2" fill="none" stroke="#222"/></svg>
      <svg viewBox="0 0 14 14"><path d="M2 2l10 10M12 2L2 12" stroke="#222"/></svg>
    </div>
  </div>
</main>

<footer class="taskbar">
  <svg class="win" viewBox="0 0 16 16"><path d="M0 2.500l6.500-1v6H0zM7.500 1.300L16 0v7.500H7.500zM0 8.500h6.500v6l-6.500-1zM7.500 8.500H16V16l-8.500-1.300z" fill="#fff"/></svg>
  <div class="search">搜索 Web 和 Windows</div>
  <div class="tb-icons">
    <span class="tb"><svg viewBox="0 0 24 24"><path d="M16 4C8 3 5 9 6 14c1 6 10 8 12 2 1-4-4-6-6-3s2 5 3 3M11 3c-3 2-3 4-2 6" fill="none" stroke="#eee" stroke-width="1.500"/></svg></span>
    <span class="tb"><svg viewBox="0 0 24 24"><path d="M3 13C3 6 8 2 13 2c6 0 9 4 9 10v2H8c0 5 8 6 12 3v5c-7 3-17 1-17-9zM8 10h9c0-5-8-5-9 0z" fill="#1478d4"/></svg></span>
    <span class="tb run"><svg viewBox="0 0 24 24"><path d="M2 5h8l2 2h10v15H2z" fill="#f6d36a"/><rect x="2" y="9" width="20" height="13" fill="#fbe08a"/><path d="M7 22v-7h10v7h-3v-4h-4v4z" fill="#2a9fe0"/></svg></span>
    <span class="tb"><svg viewBox="0 0 24 24"><path d="M4 7h16l1 16H3z" fill="#fff"/><path d="M8 8V4a4 4 0 0 1 8 0v4" fill="none" stroke="#fff" stroke-width="1.500"/><path d="M8 11h3.500v3.500H8zM12.500 11H16v3.500h-3.500zM8 15.500h3.500V19H8zM12.500 15.500H16V19h-3.500z" fill="#111"/></svg></span>
    <span class="tb run"><svg viewBox="0 0 24 24"><circle cx="12" cy="12" r="10" fill="#7ac143"/><circle cx="12" cy="12" r="6" fill="#fff"/><path d="M7 12h10M12 8c3 0 4 2 4 4M16 15c-2 2-6 2-8-1" stroke="#5aa82a" stroke-width="2" fill="none"/><path d="M16 2c3 0 6 1 6 3" stroke="#4a8" fill="none"/></svg></span>
    <span class="tb run"><svg viewBox="0 0 24 24"><path d="M18 2C8 0 3 6 4 14c1 7 10 10 14 6 3-4 1-9-5-8 2 2 3 5 0 6-4 0-5-8 0-12 1-1 3-2 5-4z" fill="#1a8ae0"/><path d="M4 10l10 12" stroke="#e04848" stroke-width="4"/></svg></span>
    <span class="tb run"><svg viewBox="0 0 24 24"><path d="M19 2C8 0 3 6 4 14c1 7 10 10 14 6 3-4 1-9-5-8 2 2 3 5 0 6-4 0-5-8 0-12 1-1 3-2 6-4z" fill="#1a8ae0"/></svg></span>
    <span class="tb run"><svg viewBox="0 0 24 24"><path d="M8 1h14l-5 21H3z" fill="#2f74c8"/><path d="M5 21L10 3h3L8 21z" fill="#dfeafa"/><path d="M13 13h5" stroke="#fff"/></svg></span>
    <span class="tb run active"><svg viewBox="0 0 24 24"><rect x="2" y="2" width="20" height="20" rx="2" fill="#f4c020"/><rect x="2" y="2" width="4" height="20" fill="#e85030"/><rect x="18" y="2" width="4" height="20" fill="#38a848"/><rect x="6" y="6" width="12" height="12" fill="#fff"/><path d="M8 9h8M8 12h8M8 15h8" stroke="#3070c0" stroke-width="1.500"/></svg></span>
  </div>
  <div class="tray">
    <svg class="t-caret" viewBox="0 0 12 8"><path d="M1 7l5-5 5 5" fill="none" stroke="#fff"/></svg>
    <svg class="t-batt" viewBox="0 0 18 14"><path d="M1 2h2M2 0v6M1 6h2M2 6v3" stroke="#fff"/><rect x="5" y="4" width="12" height="7" fill="#fff"/></svg>
    <svg class="t-wifi" viewBox="0 0 16 14"><path d="M1 13C2 7 8 2 15 1M5 13c1-3 4-6 8-7M9 13c0-1 1-2 2-3" fill="none" stroke="#ddd"/><rect x="11" y="10" width="3" height="3" fill="#fff"/></svg>
    <svg class="t-vol" viewBox="0 0 16 14"><path d="M1 5h3l3-3v10L4 9H1z" fill="none" stroke="#fff"/><path d="M9 4c1 2 1 4 0 6M11 2c2 3 2 7 0 10M13 1c3 4 3 8 0 12" fill="none" stroke="#fff"/></svg>
    <svg class="t-msg" viewBox="0 0 16 16"><path d="M1 1h14v11H10l-2 3-2-3H1z" fill="#fff"/><path d="M4 4h8M4 6.500h8M4 9h5" stroke="#000"/></svg>
    <span class="t-ime">简体</span>
    <span class="t-clock"><span>22:16</span><span>2016/8/5</span></span>
  </div>
</footer>

<div class="nav-arrow arrow-left"><svg viewBox="0 0 76 76"><path d="M59 38H20M38 19L19 38l19 19" fill="none" stroke="#fff" stroke-width="10" stroke-linecap="round" stroke-linejoin="round"/></svg></div>
<div class="nav-arrow arrow-right"><svg viewBox="0 0 76 76"><path d="M17 38h39M37 19l19 19-19 19" fill="none" stroke="#fff" stroke-width="10" stroke-linecap="round" stroke-linejoin="round"/></svg></div>
<div class="mark"><i></i></div>
</body>
</html>
```
FILE: styles.css
```css
* { box-sizing: border-box; }
html, body { margin: 0; padding: 0; }
body {
  position: relative;
  width: 1366px;
  height: 768px;
  overflow: hidden;
  display: flex;
  flex-direction: column;
  background: #f0f0f0;
  color: #333;
  font: 12px/16px "Liberation Sans", "Noto Sans CJK SC", sans-serif;
}
i, b { font-style: normal; }
ul { margin: 0; padding: 0; list-style: none; }
.defs { position: absolute; }

/* viewer bar */
.viewer-bar {
  position: relative;
  flex: 0 0 25px;
  display: flex;
  align-items: center;
  overflow: hidden;
  background: #4579d2;
  color: #dce6f6;
  padding-left: 4px;
}
.viewer-logo { width: 16px; height: 18px; flex: none; }
.viewer-title { margin-left: 5px; white-space: nowrap; letter-spacing: .1px; filter: blur(.3px); }
.viewer-controls { position: absolute; left: 1220px; top: 3px; display: flex; align-items: center; gap: 14px; }
.vtri { width: 0; height: 0; border: 5px solid transparent; border-top: 6px solid #fff; border-bottom: 0; margin-right: 4px; }
.vbtn { width: 16px; height: 16px; }

.score {
  position: absolute;
  border-radius: 50%;
  background: linear-gradient(#7ad07a, #3fae4c);
  border: 2px solid #fff;
  box-shadow: 0 0 0 1px #a8a8a8, 0 1px 3px rgba(0,0,0,.4);
  color: #fff;
  font-size: 12px;
  line-height: 12px;
  display: flex;
  justify-content: center;
  align-items: flex-end;
}
.score-top { left: 558px; top: -25px; width: 43px; height: 43px; padding-bottom: 4px; }
.score-app { left: 510px; top: -28px; width: 47px; height: 47px; padding-bottom: 4px; }

.pill {
  position: absolute;
  border-radius: 9px;
  background: #fff;
  box-shadow: 0 0 3px rgba(0,0,0,.5);
  padding: 3px 5px;
}
.pill i {
  display: block;
  height: 100%;
  border-radius: 2px;
  background: repeating-linear-gradient(90deg, #5aa4e4 0 1px, #2a84d8 1px 3px);
}
.pill-top { left: 1120px; top: 1px; width: 66px; height: 17px; }
.pill-app { left: 1068px; top: 0; width: 67px; height: 18px; }

/* stage and application window */
.stage { flex: 0 0 703px; padding: 5px 33px 5px 32px; background: #f0f0f0; box-shadow: inset 0 3px 3px -2px rgba(0,0,0,.15); }
.app {
  position: relative;
  height: 693px;
  display: flex;
  flex-direction: column;
  overflow: hidden;
  background: #f0f0f0;
  box-shadow: 0 0 6px rgba(0,0,0,.45);
  filter: blur(.3px);
}
.app-title { flex: 0 0 22px; background: #fff; line-height: 22px; white-space: nowrap; overflow: hidden; color: #333; }
.app-title-text { display: block; margin-left: -5px; letter-spacing: .3px; }
.menu { flex: 0 0 26px; display: flex; align-items: center; gap: 9px; background: #fff; white-space: nowrap; color: #444; }
.m-first { margin: 0 -2px 0 2px; }
.m-mod { margin-left: 1px; }
.m-steel { margin-left: 2px; }
.m-on { background: #3e9bfb; color: #e8f2ff; width: 48px; height: 22px; line-height: 22px; text-align: center; margin: 0 -4px 0 -3px; }
.m-open { margin-left: -1px; }
.m-sug { margin-left: 7px; }
.topbar { flex: 0 0 29px; display: flex; align-items: center; padding-top: 1px; background: #fff; border-top: 1px solid #e2e2e2; border-bottom: 1px solid #e2e2e2; white-space: nowrap; overflow: hidden; }
.top-left { flex: 0 0 651px; display: flex; align-items: center; gap: 5px; }
.ic-clip { margin-left: -6px; }
.ic-save { margin-left: 1px; }
.sep-save { margin: 0 1px; }
.top-right { margin-left: 6px; }
.top-right .caret.dark { margin-right: -2px; }
.t-nudge { margin-left: 1px; }

.ic { flex: none; width: 16px; height: 16px; }
.seq { display: flex; align-items: center; }
.g6 { gap: 6px; }
.g7 { gap: 7px; }
.g8 { gap: 8px; }
.tool { display: inline-flex; align-items: center; gap: 3px; white-space: nowrap; color: #333; }
.off { color: #a2a2a2; }
.sep { flex: none; display: block; width: 1px; height: 21px; background: #aaa; }
.handle { flex: none; display: block; width: 2px; height: 20px; background: repeating-linear-gradient(#bbb 0 1px, transparent 1px 3px); }
.caret { flex: none; display: block; width: 0; height: 0; margin: 0 -2px 0 -1px; border: 3.500px solid transparent; border-top: 4px solid #999; border-bottom: 0; }
.caret.dark { border-top-color: #222; margin: 0 -5px 0 1px; }
.dd { flex: none; display: flex; align-items: center; justify-content: center; width: 13px; height: 21px; background: #dcdcdc; border: 1px solid #bdbdbd; color: #666; }
.dd svg { width: 9px; height: 6px; }
.t2d { margin-right: 1px; }

/* nav */
.workspace { flex: 1; display: flex; min-height: 0; }
.nav { flex: 0 0 120px; margin-right: 8px; padding-top: 3px; display: flex; flex-direction: column; }
.nav-head { flex: 0 0 15px; display: flex; align-items: center; background: #0055e6; color: #fff; font-size: 12px; padding-right: 4px; overflow: hidden; }
.nav-head span { flex: 1; }
.pin { width: 8px; height: 11px; margin-right: 9px; }
.close { width: 9px; height: 9px; color: #c8d8f8; }
.nav-btn { flex: 0 0 22px; display: flex; align-items: center; justify-content: center; padding-right: 34px; background: #eee; border: 1px solid #c8c8c8; border-left: 0; color: #444; }
.nav-head + .nav-btn { margin-top: 7px; }
.nb-tall { flex-basis: 23px; }
.nav-search { flex: 0 0 26px; background: #fff; border-right: 1px solid #c8c8c8; padding: 13px 0 0 2px; }
.nav-search i { display: block; width: 8px; height: 2px; background: #4a8a88; }
.tree-box { flex: 0 0 453px; display: flex; flex-direction: column; border: 1px solid #aaa; border-left: 0; background: #f0f0f0; }
.tree-main { flex: 1; display: flex; min-height: 0; }
.tree { flex: 0 0 101px; padding-top: 1px; overflow: hidden; background: #fff; }
.tree li { display: flex; align-items: center; height: 15.8px; white-space: nowrap; color: #222; font-family: "Noto Sans CJK SC", sans-serif; font-weight: 300; }
.l1 i { display: block; flex: none; width: 4px; height: 9px; margin: 0 7px 0 0; background: linear-gradient(#e8b030, #b87810); }
.l1.open i { width: 5px; height: 5px; margin-right: 6px; background: #c8a040; }
.l2 i { display: block; flex: none; width: 6px; height: 1px; margin: 0 2px 0 1px; background: repeating-linear-gradient(90deg, #888 0 1px, transparent 1px 2px); }
.l2 .ic { margin-right: 4px; }
.mono { font: 10px/16px "Liberation Mono", monospace; }
.sel { position: relative; }
.sel::before { content: ""; position: absolute; left: 6px; top: 0; width: 62px; height: 100%; background: #d2d2d2; }
.sel i, .sel .ic, .sel span { position: relative; }
.vscroll { flex: 1; display: flex; flex-direction: column; align-items: center; background: #f0f0f0; color: #666; }
.vscroll svg { width: 10px; height: 6px; flex: none; }
.up { margin-top: 7px; transform: rotate(180deg); }
.vthumb { width: 100%; height: 348px; margin-top: 52px; background: #c8c8c8; }
.down { margin-top: 6px; }
.hscroll { flex: 0 0 16px; display: flex; align-items: center; color: #666; }
.hthumb { width: 81px; height: 100%; background: #c8c8c8; }
.right { width: 10px; height: 6px; margin-left: 6px; transform: rotate(-90deg); }
.left { width: 10px; height: 6px; transform: rotate(90deg); }
.nb2 { flex: 0 0 22px; }
.nb-first { margin-top: 1px; }

/* drawing panel */
.panel { flex: 0 0 185px; margin-right: 4px; padding-top: 3px; display: flex; flex-direction: column; }
.panel-head { flex: 0 0 15px; display: flex; align-items: center; border: 1px solid #999; border-bottom: 0; background: #eee; color: #333; font-size: 13px; padding-right: 4px; overflow: hidden; }
.panel-head span { flex: 1; }
.panel-head .close { color: #777; }
.tabs { flex: 0 0 21px; display: flex; align-items: flex-end; padding: 2px 0 0 2px; }
.tab { height: 18px; line-height: 18px; padding: 0 2px; margin-left: 2px; border: 1px solid #d8d8d8; border-bottom: 0; background: #eee; white-space: nowrap; }
.tab.on { height: 19px; padding: 0 6px; margin-left: 0; background: #fff; border: 0; }
.panel-body { flex: 1; min-height: 0; margin-left: 2px; padding: 4px 4px 0 4px; background: #fff; display: flex; flex-direction: column; box-shadow: inset -4px 0 0 #e8e8e8; }
.panel-tools { flex: 0 0 23px; display: flex; align-items: stretch; }
.pbtn { width: 57px; display: flex; align-items: center; justify-content: center; background: #eee; border: 1px solid #c8c8c8; color: #444; }
.pbtn.off { color: #aaa; }
.pdrop { width: 8px; display: flex; align-items: center; justify-content: center; background: #eee; border-bottom: 1px solid #c8c8c8; }
.pdrop .caret { margin: 0; }
.pmore { margin-left: auto; margin-right: -1px; width: 12px; background: #eee; border: 1px solid #c8c8c8; font-weight: 700; line-height: 12px; text-align: center; }
.table { flex: 1; min-height: 0; margin-top: 3px; display: flex; flex-direction: column; border: 2px solid #c8c8c8; border-width: 1px 2px 2px 1px; }
.thead { flex: 0 0 26px; display: flex; border-bottom: 1px solid #c8c8c8; background: linear-gradient(#fafafa, #f2f2f2); }
.th0 { flex: 0 0 22px; border-right: 1px solid #d4d4d4; }
.th1 { flex: 1; display: flex; align-items: center; justify-content: center; border-right: 1px solid #d4d4d4; color: #444; }
.tbody { flex: 1; background: #fff; }
.thscroll { flex: 0 0 16px; display: flex; align-items: center; background: #f0f0f0; color: #666; margin-bottom: 1px; padding-left: 5px; }
.ththumb { width: 16px; height: 100%; margin-left: 4px; background: #c8c8c8; }
.thscroll .right { margin-left: auto; margin-right: 4px; }

/* work area */
.work { flex: 0 0 984px; min-width: 0; display: flex; flex-direction: column; }
.row { position: relative; display: flex; align-items: center; white-space: nowrap; }
.row1 { flex: 0 0 30px; padding: 4px 0 0 11px; border-bottom: 1px solid #dcdcdc; }
.row2 { flex: 0 0 26px; justify-content: flex-end; padding-right: 19px; }
.row3 { flex: 0 0 28px; padding-left: 1px; }
.row4 { flex: 0 0 27px; padding-left: 12px; border-top: 1px solid #fafafa; }
.combo { display: flex; align-items: center; justify-content: space-between; height: 21px; background: #fff; margin-right: 3px; }
.combo span { padding-left: 2px; }
.c55 { width: 55px; }
.c68 { width: 68px; }
.sep-a { margin: 0 7px 0 1px; }
.h-a { margin: 0 6px 0 8px; }
.row1 .seq .sep { margin: 0 -1.500px; }
.more { position: absolute; right: -1px; top: 2px; font-weight: 700; color: #222; font-size: 11px; line-height: 12px; }
.row4 .more { top: 3px; }
.aux { height: 26px; padding: 0 5px 0 8px; background: #f2f2f2; border-left: 2px dotted #c8c8c8; border-right: 1px solid #e0e0e0; border-bottom: 1px solid #e4e4e4; }
.rowbox { display: flex; align-items: center; height: 28px; width: 718px; padding-left: 7px; border-right: 1px solid #d8d8d8; border-bottom: 1px solid #e4e4e4; background: #f2f2f2; }
.select { display: inline-flex; align-items: center; gap: 5px; width: 51px; height: 21px; padding-left: 3px; background: #cbe4f9; border: 1px solid #a8d0f0; white-space: nowrap; }
.select .caret { margin: 0 -3px 0 -2px; }
.sep-b { margin-left: 9px; }
.pt { margin-left: 7px; gap: 2px; }
.sep-c { margin-left: 6px; background: #ccc; }
.h-b { margin: 0 8px 0 6px; }
.h-c { margin: 0 6px 0 9px; }
.canvas { position: relative; flex: 0 0 482px; background: #000; }
.axes { position: absolute; left: 34px; top: 378px; width: 70px; height: 70px; }
.status { flex: 0 0 23px; display: flex; align-items: center; width: 471px; padding: 3px 0 0 8px; border-right: 1px solid #d8d8d8; background: #f2f2f2; }
.st { height: 20px; padding: 0 3px; gap: 4px; }
.st.on { background: #cbe4f9; border-bottom: 1px solid #a8d0f0; }
.st-b { gap: .5px; }
.st-a .st:first-child { margin-right: 1px; }
.h-d { margin: 0 6px 0 2px; }

/* IME */
.ime { position: absolute; left: 788px; top: 0; display: flex; align-items: center; height: 28px; }
.ime-s { width: 28px; height: 28px; border-radius: 6px; background: #ef5b1c; color: #fff; font: 700 22px/28px "Liberation Sans", sans-serif; text-align: center; transform: rotate(-10deg); z-index: 1; }
.ime-bar { display: flex; align-items: center; gap: 5px; width: 155px; height: 23px; margin-top: 5px; padding-left: 4px; background: #fff; border: 1px solid #c8d8ec; }
.ime-bar svg { width: 17px; height: 15px; flex: none; }
.ime-zh { color: #1a6fc0; font-size: 15px; font-weight: 700; margin-right: 3px; }
.app-controls { position: absolute; right: 8px; top: 4px; display: flex; gap: 31px; }
.app-controls svg { width: 14px; height: 14px; }

/* taskbar */
.taskbar { position: relative; flex: 0 0 40px; display: flex; align-items: center; background: #000; color: #fff; }
.win { width: 17px; height: 17px; margin: 0 15px 0 16px; }
.search { width: 344px; height: 40px; line-height: 40px; padding-left: 9px; background: #333; color: #a8a8a8; font-size: 15px; white-space: nowrap; }
.tb-icons { display: flex; margin-left: -1px; gap: 1px; }
.tb { position: relative; display: flex; align-items: center; justify-content: center; width: 48px; height: 40px; }
.tb svg { width: 24px; height: 24px; }
.run::after { content: ""; position: absolute; left: 4px; right: 4px; bottom: 0; height: 2px; background: #76b9ed; }
.active { background: #333; }
.active::after { left: 0; right: 0; }
.tb-icons .tb:first-child { margin-right: 5px; }
.tray { position: absolute; left: 1136px; top: 0; height: 40px; display: flex; align-items: center; }
.t-caret { flex: none; width: 12px; height: 8px; margin-right: 10px; }
.t-batt { flex: none; width: 16px; height: 12px; margin-right: 11px; }
.t-wifi { flex: none; width: 14px; height: 13px; margin-right: 7px; }
.t-vol { flex: none; width: 16px; height: 14px; margin-right: 8px; }
.t-msg { flex: none; width: 17px; height: 17px; margin-right: 10px; }
.t-ime { flex: none; width: 24px; margin-right: 16px; white-space: nowrap; }
.t-clock { flex: none; display: flex; flex-direction: column; align-items: center; width: 52px; font-size: 13px; line-height: 18px; }

/* overlays on the whole picture */
.nav-arrow { position: absolute; top: 339px; width: 76px; height: 76px; border-radius: 50%; }
.nav-arrow svg { display: block; width: 100%; height: 100%; }
.arrow-left { left: 16px; border: 4px solid rgba(255,255,255,.6); background: rgba(255,255,255,.12); }
.arrow-left svg { opacity: .65; }
.arrow-right { left: 1275px; border: 3px solid rgba(255,255,255,.62); background: rgba(255,255,255,.04); }
.arrow-right svg { opacity: .62; }
.mark { position: absolute; left: 628px; top: 16px; width: 72px; height: 78px; border: solid #ff0000; border-width: 7px 8px 9px 8px; }
.mark i { position: absolute; left: -9px; top: 0; width: 5px; height: 18px; background: #ff0000; border-radius: 3px; }
```
